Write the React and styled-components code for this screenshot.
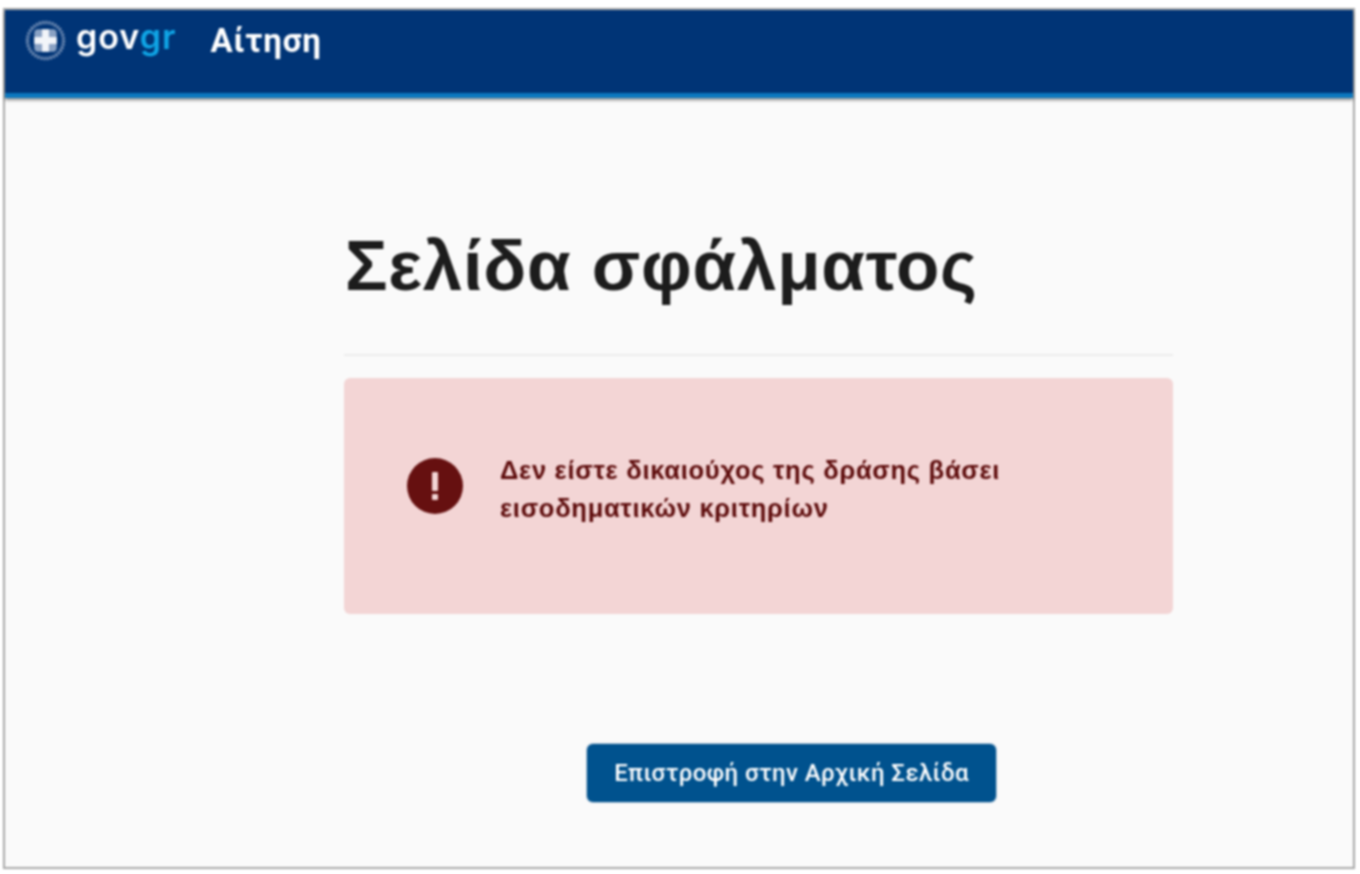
import React from 'react';
import styled, { createGlobalStyle } from 'styled-components';

const GlobalStyle = createGlobalStyle`
  html, body {
    margin: 0;
    padding: 0;
    background: #fff;
    font-family: "Liberation Sans", Arial, sans-serif;
  }
`;

const App = () => {
  return (
    <Page>
      <GlobalStyle />
      <Frame>
        <Header>
          <Logo>
            <Crest width="41" height="41" viewBox="0 0 42 42">
              <circle cx="21" cy="21" r="18.5" fill="none" stroke="#7f98bc" strokeWidth="3.5" strokeDasharray="2 1.2" />
              <rect x="9.5" y="9.5" width="23" height="23" rx="4" fill="#8aa2c4" />
              <rect x="9.5" y="17.5" width="23" height="7" fill="#f2f5f9" />
              <rect x="17.5" y="9.5" width="7" height="23" fill="#f2f5f9" />
            </Crest>
            <LogoWord>
              gov<LogoAccent>gr</LogoAccent>
            </LogoWord>
          </Logo>
          <AppTitle>Αίτηση</AppTitle>
        </Header>
        <Main>
          <Title>Σελίδα σφάλματος</Title>
          <Divider />
          <Alert>
            <AlertIcon viewBox="0 0 56 56">
              <circle cx="28" cy="28" r="28" fill="#661010" />
              <rect x="25" y="14" width="6" height="19" rx="1" fill="#f3d5d5" />
              <rect x="25" y="36" width="6" height="6" rx="1" fill="#f3d5d5" />
            </AlertIcon>
            <AlertText>
              Δεν είστε δικαιούχος της δράσης βάσει
              <br />
              εισοδηματικών κριτηρίων
            </AlertText>
          </Alert>
          <Actions>
            <BackButton>Επιστροφή στην Αρχική Σελίδα</BackButton>
          </Actions>
        </Main>
      </Frame>
    </Page>
  );
};

const Page = styled.div`
  width: 1360px;
  height: 874px;
  padding: 8px 5px 5px 3px;
  box-sizing: border-box;
  overflow: hidden;
`;

const Frame = styled.div`
  height: 100%;
  box-sizing: border-box;
  border: 2px solid #a8a8a8;
  background: #fafafa;
  display: flex;
  flex-direction: column;
  filter: blur(0.8px);
`;

const Header = styled.header`
  height: 88px;
  box-sizing: border-box;
  flex: none;
  display: flex;
  align-items: flex-start;
  background: #003476;
  border-bottom: 5px solid #0c78bf;
  box-shadow: 0 2px 3px rgba(0, 0, 0, 0.45);
  padding: 9px 0 0 20px;
  color: #fff;
`;

const Logo = styled.div`
  display: flex;
  align-items: flex-start;
  gap: 10px;
`;

const Crest = styled.svg`
  margin-top: 1px;
`;

const LogoWord = styled.span`
  font-family: Inter, sans-serif;
  font-size: 34px;
  line-height: 32px;
  font-weight: 600;
  letter-spacing: 1px;
  margin-top: 2px;
`;

const LogoAccent = styled.span`
  color: #0fa5e6;
`;

const AppTitle = styled.div`
  font-family: Roboto, sans-serif;
  font-size: 33px;
  line-height: 44px;
  font-weight: 700;
  letter-spacing: 0.8px;
  margin-left: 34px;
`;

const Main = styled.main`
  width: 829px;
  margin-left: 339px;
  display: flex;
  flex-direction: column;
`;

const Title = styled.h1`
  margin: 126px 0 0 1px;
  font-family: "Liberation Sans", sans-serif;
  font-size: 71px;
  line-height: 84px;
  font-weight: 700;
  color: #1c1c1c;
  letter-spacing: 0.7px;
`;

const Divider = styled.hr`
  margin: 46px 0 0;
  border: 0;
  border-top: 2px solid #ececec;
`;

const Alert = styled.div`
  margin-top: 22px;
  height: 236px;
  box-sizing: border-box;
  background: #f3d5d5;
  border-radius: 6px;
  display: flex;
  align-items: flex-start;
  padding: 73px 0 0 63px;
`;

const AlertIcon = styled.svg`
  width: 56px;
  height: 56px;
  flex: none;
  margin-top: 7px;
`;

const AlertText = styled.p`
  margin: 0 0 0 37px;
  font-family: "Liberation Sans", sans-serif;
  font-size: 25.5px;
  line-height: 38px;
  font-weight: 700;
  letter-spacing: 0.73px;
  color: #5c0a0a;
`;

const Actions = styled.div`
  display: flex;
  justify-content: flex-start;
  padding-left: 243px;
  margin-top: 130px;
`;

const BackButton = styled.button`
  width: 409px;
  height: 58px;
  border: 0;
  border-radius: 6px;
  background: #00528e;
  box-shadow: 0 0 0 1px #b4c9dc;
  color: #fff;
  font-family: Roboto, sans-serif;
  font-size: 24px;
  font-weight: 500;
  letter-spacing: 0.4px;
  cursor: pointer;
`;

export default App;
